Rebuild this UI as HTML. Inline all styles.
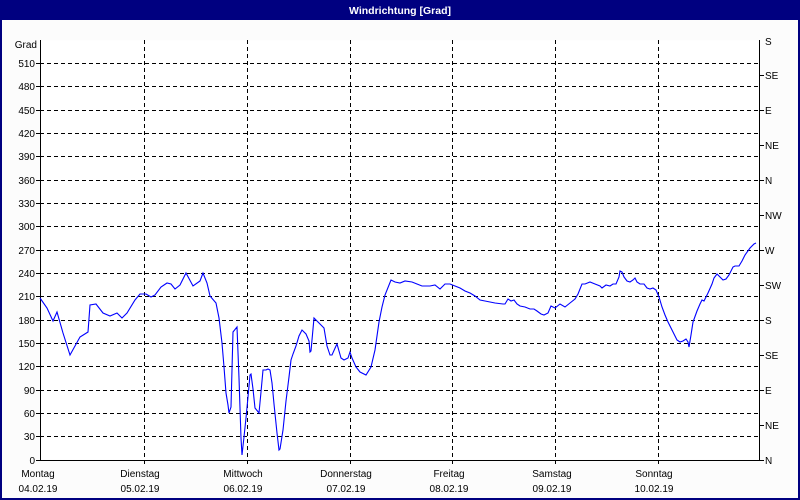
<!DOCTYPE html>
<html><head><meta charset="utf-8"><style>
html,body{margin:0;padding:0;background:#fff}
svg{display:block}
text{font-family:"Liberation Sans","DejaVu Sans",sans-serif;font-size:10px;fill:#000}
</style></head><body>
<svg width="800" height="500" xmlns="http://www.w3.org/2000/svg">
<rect x="0" y="0" width="800" height="500" fill="#fcfcfc"/>
<rect x="0" y="0" width="800" height="20" fill="#000080"/>
<rect x="0" y="0" width="2" height="500" fill="#000080"/>
<rect x="798" y="0" width="2" height="500" fill="#000080"/>
<rect x="0" y="498" width="800" height="2" fill="#000080"/>
<text x="400" y="14" text-anchor="middle" style="font-weight:bold;fill:#fff;font-size:10.5px">Windrichtung [Grad]</text>
<rect x="40.5" y="40.5" width="719" height="419" fill="#fff"/>
<g stroke="#000" stroke-width="1" stroke-dasharray="4,3" fill="none">
<path d="M40 63.5H760M40 86.5H760M40 110.5H760M40 133.5H760M40 156.5H760M40 180.5H760M40 203.5H760M40 226.5H760M40 250.5H760M40 273.5H760M40 296.5H760M40 320.5H760M40 343.5H760M40 366.5H760M40 390.5H760M40 413.5H760M40 436.5H760"/>
<path d="M144.5 40V460M247.5 40V460M350.5 40V460M452.5 40V460M555.5 40V460M658.5 40V460"/>
</g>
<g stroke="#000" stroke-width="1" fill="none">
<path d="M40.5 40V460.5H760M759.5 40V460.5"/>
<path d="M36 63.5H40M36 86.5H40M36 110.5H40M36 133.5H40M36 156.5H40M36 180.5H40M36 203.5H40M36 226.5H40M36 250.5H40M36 273.5H40M36 296.5H40M36 320.5H40M36 343.5H40M36 366.5H40M36 390.5H40M36 413.5H40M36 436.5H40M36 460.5H40"/>
<path d="M760 75.5H764M760 110.5H764M760 145.5H764M760 180.5H764M760 215.5H764M760 250.5H764M760 285.5H764M760 320.5H764M760 355.5H764M760 390.5H764M760 425.5H764M760 460.5H764"/>
<path d="M144.5 460V464M247.5 460V464M350.5 460V464M452.5 460V464M555.5 460V464M658.5 460V464"/>
</g>
<g text-anchor="end">
<text x="37" y="48">Grad</text>
<text x="35" y="67">510</text><text x="35" y="90">480</text><text x="35" y="114">450</text><text x="35" y="137">420</text><text x="35" y="160">390</text><text x="35" y="184">360</text><text x="35" y="207">330</text><text x="35" y="230">300</text><text x="35" y="254">270</text><text x="35" y="277">240</text><text x="35" y="300">210</text><text x="35" y="324">180</text><text x="35" y="347">150</text><text x="35" y="370">120</text><text x="35" y="394">90</text><text x="35" y="417">60</text><text x="35" y="440">30</text><text x="35" y="464">0</text>
</g>
<g>
<text x="765" y="45">S</text><text x="765" y="79">SE</text><text x="765" y="114">E</text><text x="765" y="149">NE</text><text x="765" y="184">N</text><text x="765" y="219">NW</text><text x="765" y="254">W</text><text x="765" y="289">SW</text><text x="765" y="324">S</text><text x="765" y="359">SE</text><text x="765" y="394">E</text><text x="765" y="429">NE</text><text x="765" y="464">N</text>
</g>
<g text-anchor="middle">
<text x="38" y="477">Montag</text><text x="38" y="492">04.02.19</text>
<text x="140" y="477">Dienstag</text><text x="140" y="492">05.02.19</text>
<text x="243" y="477">Mittwoch</text><text x="243" y="492">06.02.19</text>
<text x="346" y="477">Donnerstag</text><text x="346" y="492">07.02.19</text>
<text x="449" y="477">Freitag</text><text x="449" y="492">08.02.19</text>
<text x="552" y="477">Samstag</text><text x="552" y="492">09.02.19</text>
<text x="654" y="477">Sonntag</text><text x="654" y="492">10.02.19</text>
</g>
<polyline fill="none" stroke="#0000ff" stroke-width="1.1" points="40,298 47,308 53,321 57,312 63,333 70,355 80,337 88,332 90,305 96,304 103,313 110,316 117,313 122,318 127,313 135,300 140,294 146,294 151,297 155,295 161,287 167,283 171,284 175,289 180,285 186,273 193,286 200,281 203,273 207,283 210,296 216,303 219,318 222,343 224,367 226,393 228,405 229,413 231,407 233,332 237,327 239,378 241,438 242,455 244,437 246,418 248,397 250,375 251,374 253,389 255,408 259,413 261,392 263,370 266,370 268,369 270,370 272,383 274,404 277,433 279,450 280,449 283,430 286,401 289,377 291,360 293,354 296,346 299,336 302,330 306,334 309,341 310,352 311,351 314,318 318,322 324,328 327,346 330,355 332,355 336,346 337,344 341,358 344,360 348,358 350,352 352,358 356,367 360,372 366,375 371,367 375,350 379,322 382,307 385,295 391,280 395,282 400,283 405,281 412,282 417,284 422,286 430,286 435,285 440,289 445,284 450,284 455,286 460,288 465,291 470,293 475,296 480,300 485,301 490,302 495,303 503,304 505,304 508,299 511,301 514,300 517,304 520,306 525,307 530,309 534,309 537,311 541,314 544,315 548,313 551,306 555,308 560,304 565,307 570,303 575,299 578,294 582,284 585,284 590,282 595,284 600,286 602,288 606,285 610,286 613,284 616,284 619,277 620,271 622,272 624,277 627,281 630,282 633,280 635,278 637,282 640,284 644,284 647,288 650,289 653,288 656,290 659,297 662,307 665,315 668,322 673,332 677,340 680,342 683,341 686,339 688,342 689,347 691,335 693,322 697,311 700,304 702,300 704,301 708,293 712,284 714,278 717,274 720,277 723,280 726,279 729,275 733,267 735,266 739,266 742,261 745,255 750,248 754,244 756,243"/>
</svg>
</body></html>
